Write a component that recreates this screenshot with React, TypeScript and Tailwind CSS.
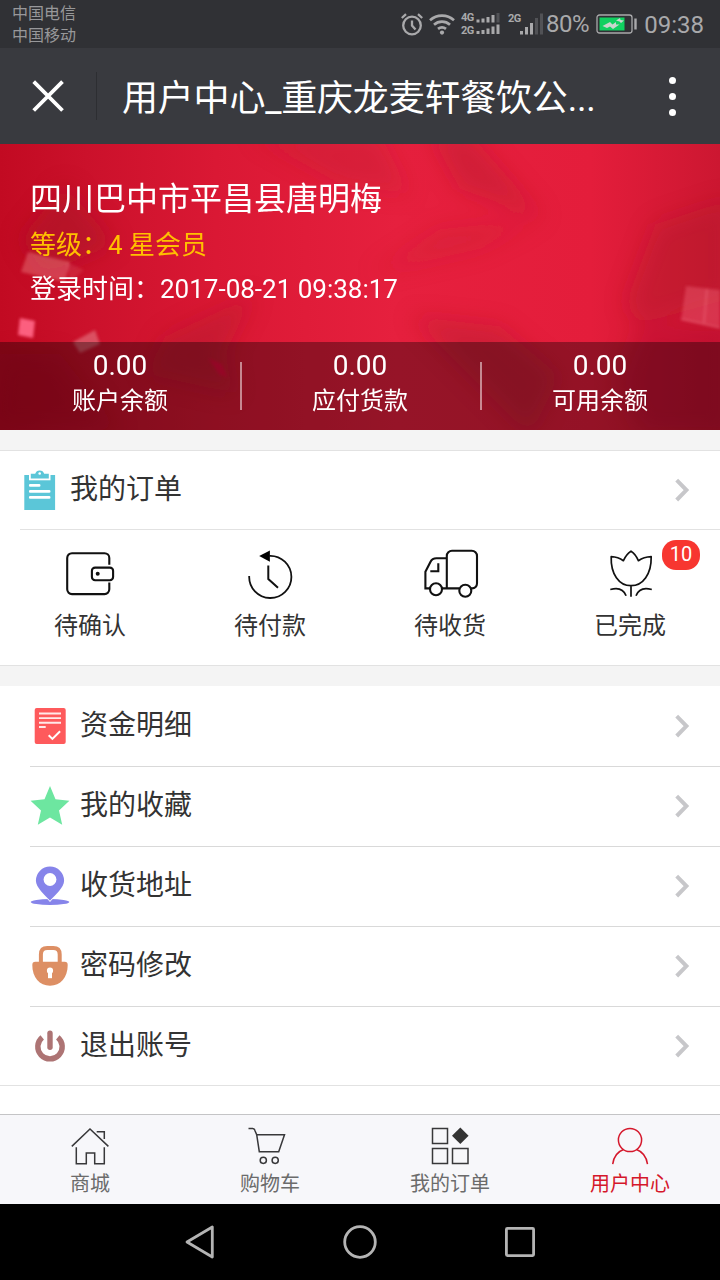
import type { ReactNode } from "react"

const ORDER_STATES = [
  { label: "待确认", icon: <WalletIcon /> },
  { label: "待付款", icon: <HistoryIcon /> },
  { label: "待收货", icon: <TruckIcon /> },
  { label: "已完成", icon: <TulipIcon />, badge: 10 },
]

const BALANCES = [
  { label: "账户余额", value: "0.00" },
  { label: "应付货款", value: "0.00" },
  { label: "可用余额", value: "0.00" },
]

const MENU = [
  { label: "资金明细", icon: <BillIcon /> },
  { label: "我的收藏", icon: <StarIcon /> },
  { label: "收货地址", icon: <PinIcon /> },
  { label: "密码修改", icon: <LockIcon /> },
  { label: "退出账号", icon: <PowerIcon /> },
]

const TABS = [
  { label: "商城", icon: <HomeIcon /> },
  { label: "购物车", icon: <CartIcon /> },
  { label: "我的订单", icon: <GridIcon /> },
  { label: "用户中心", icon: <UserIcon />, active: true },
]

function LineIcon({ children }: { children: ReactNode }) {
  return (
    <svg viewBox="0 0 60 60" className="size-[60px]" fill="none" stroke="#111" strokeWidth="2.1">
      {children}
    </svg>
  )
}

function WalletIcon() {
  return (
    <LineIcon>
      <path d="M49.3 20.7V14a4.8 4.8 0 0 0-4.8-4.8H12A4.8 4.8 0 0 0 7.2 14v31.3a4.8 4.8 0 0 0 4.8 4.8h32.5a4.8 4.8 0 0 0 4.8-4.8v-6.8" />
      <rect x="31.9" y="23.6" width="21.2" height="12.6" rx="3.2" />
      <circle cx="37.7" cy="29.7" r="2" fill="#111" stroke="none" />
    </LineIcon>
  )
}

function HistoryIcon() {
  return (
    <LineIcon>
      <path d="M9.2 32A21.1 21.1 0 1 0 29.5 11.8" strokeWidth="1.8" />
      <path d="M28.3 21.5V35l9.7 8.8" strokeWidth="2" />
      <path d="M19.2 12.1 29.9 6.5v11.2Z" fill="#000" stroke="none" />
    </LineIcon>
  )
}

function TruckIcon() {
  return (
    <LineIcon>
      <path d="M10.2 44.4H5.4V27.7l5-9.8q1.9-3.6 6-3.6h10.3" />
      <path d="M22 44.4h17.3M51 44.4h1.2a4.8 4.8 0 0 0 4.8-4.8V12a5.2 5.2 0 0 0-5.2-5.2H32a5.2 5.2 0 0 0-5.2 5.2v32.4" />
      <path d="M18.3 19.3v8h-8" />
      <circle cx="16" cy="45.2" r="6" />
      <circle cx="45.3" cy="46.7" r="6" />
    </LineIcon>
  )
}

function TulipIcon() {
  return (
    <LineIcon>
      <g strokeWidth="1.7" strokeLinejoin="round">
        <path d="M31 41.7C19 41.7 10.6 30 11.2 12.7q7 .3 12.2 4 3-6.7 7.6-9.5 4.6 2.8 7.4 9.5 5.4-3.7 12.8-4C51.5 30 43 41.7 31 41.7Zm0 0v11" />
        <path d="M10.3 45.5q12-3.5 15.8 6.2M51.8 45.5q-12-3.5-15.8 6.2" />
      </g>
    </LineIcon>
  )
}

function ClipboardIcon() {
  return (
    <svg viewBox="0 0 40 40" className="size-10" fill="#5bc6d8">
      <path d="M4.3 5h30.8v35H4.3z" />
      <path d="M9 3h21.500v7.300H9z" fill="#fff" />
      <path d="M10.8 3.800h4.400a4.700 4.700 0 0 1 9 0h4.600v4.700h-18z" />
      <circle cx="19.7" cy="3.5" r="1.3" fill="#fff" />
      <path d="M10.2 15.4h9M10.2 21.4h19M10.2 27.4h19" stroke="#fff" strokeWidth="2.6" strokeLinecap="round" />
    </svg>
  )
}

function BillIcon() {
  return (
    <svg viewBox="0 0 40 40" className="size-10" fill="none">
      <rect x="4.7" y="2" width="31" height="36" rx="2" fill="#fe5a5c" />
      <path d="M9 7.5h22M9 12.1h22M9 16.7h22M9 21h6.7" stroke="#ffe9e9" strokeWidth="1.9" />
      <path d="m18.7 29.2 3.7 3.7 7.7-7.7" stroke="#fff" strokeWidth="2" />
    </svg>
  )
}

function StarIcon() {
  return (
    <svg viewBox="0 0 40 40" className="size-10" fill="#6de6a0">
      <path d="m20 0 5.5 13.2 13.9 1.5L29 24.5l3.2 14.3L20 31.5 7.8 38.8 11 24.5.6 14.7l13.9-1.5Z" />
    </svg>
  )
}

function PinIcon() {
  return (
    <svg viewBox="0 0 40 40" className="size-10" fill="#8684ea">
      <ellipse cx="20" cy="36" rx="19.3" ry="3" />
      <path
        d="M20 34.7C15 29 5.9 21.5 5.9 14.7a14.1 14.1 0 0 1 28.2 0C34.1 21.5 25 29 20 34.7Z"
        stroke="#fff"
        strokeWidth="1.8"
        paintOrder="stroke"
      />
      <circle cx="20" cy="13.5" r="6.4" fill="#fff" />
    </svg>
  )
}

function LockIcon() {
  return (
    <svg viewBox="0 0 40 40" className="size-10" fill="#dd8f64">
      <path d="M10.9 17V8.5q0-6.4 6.4-6.4h6q6.4 0 6.4 6.4V17" fill="none" stroke="#dd8f64" strokeWidth="4" />
      <path d="M5.3 15.7h29.4q3 0 3 3.3c0 12.5-7.2 20.7-17.7 20.7S2.3 31.5 2.3 19q0-3.3 3-3.3Z" />
      <path d="M18 26.5h4v5.7h-4z" fill="#fff" />
      <circle cx="20" cy="24.7" r="3.1" fill="#fff" />
    </svg>
  )
}

function PowerIcon() {
  return (
    <svg viewBox="0 0 40 40" className="size-10" fill="none" stroke="#ad7474" strokeWidth="5.4">
      <path d="M12.2 11.3a12.2 12.2 0 1 0 15.6 0" />
      <path d="M20 7.3v14" strokeLinecap="round" />
    </svg>
  )
}

function TabIcon({ children }: { children: ReactNode }) {
  return (
    <svg viewBox="0 0 40 40" className="size-10 overflow-visible" fill="none" stroke="#38383a" strokeWidth="1.5">
      {children}
    </svg>
  )
}

function HomeIcon() {
  return (
    <TabIcon>
      <path d="M1.8 20.4 20 3l18.4 17.4M26.7 5.7h7.6V13M6.3 21.3v16.4h10V27h8.4v10.7h9.6V21.3" />
    </TabIcon>
  )
}

function CartIcon() {
  return (
    <TabIcon>
      <path d="M-1.5 2.5h4.3q1.7 0 2.2 2.2l1.7 4 2.6 17h19.4l5.8-17H6.7" />
      <circle cx="13.3" cy="34.3" r="3.1" />
      <circle cx="25.2" cy="34.3" r="3.1" />
    </TabIcon>
  )
}

function GridIcon() {
  return (
    <TabIcon>
      <path d="M2.5 2.5h15v15h-15zM2.5 22.5h15v15h-15zM22.5 22.5h15.5v15h-15.5z" />
      <path d="m30.3 1.4 8.3 8.3-8.3 8.3-8.3-8.3Z" fill="#333" stroke="none" />
    </TabIcon>
  )
}

function UserIcon() {
  return (
    <TabIcon>
      <g stroke="#d5172b">
        <circle cx="20" cy="14" r="11.6" />
        <path d="M2.7 38.2Q4 27 13.5 23.5M37.5 38.2Q36 27 26.5 23.5" />
      </g>
    </TabIcon>
  )
}

function Chevron() {
  return (
    <svg viewBox="0 0 24 24" className="ml-auto size-6 shrink-0" fill="none" stroke="#c7c7ca" strokeWidth="4">
      <path d="m6.7 2.2 9.7 9.9-9.7 9.9" />
    </svg>
  )
}

function StatusBar() {
  return (
    <div className="flex h-12 bg-[#303135] text-[#a9a9ab]">
      <div className="flex flex-col pt-[3px] pl-3 text-[16px] leading-[22px] text-[#98989a]">
        <span>中国电信</span>
        <span>中国移动</span>
      </div>
      <div className="ml-auto flex h-12 items-center pr-4">
        {/* Alarm */}
        <svg viewBox="0 0 24 24" className="mr-[5px] size-6" fill="none" stroke="currentColor" strokeWidth="2.3">
          <circle cx="12" cy="13.5" r="8.8" />
          <path d="M12 8.5v5l3.5 4M1.8 6 6 2.2M22.2 6 18 2.2" />
        </svg>
        {/* Wi-Fi */}
        <svg viewBox="0 0 26 24" className="mr-1.5 h-6 w-[26px]" fill="none" stroke="currentColor" strokeWidth="2.7">
          <path d="M1 8.2a18 18 0 0 1 24 0M5 12.7a12 12 0 0 1 16 0M9 16.9a6.5 6.5 0 0 1 8 0" />
          <circle cx="13" cy="20.6" r="2.1" fill="currentColor" stroke="none" />
        </svg>
        <div className="mr-px flex w-[14px] flex-col font-[Roboto] text-[11px] leading-[13px] font-bold tracking-[-0.5px]">
          <span>4G</span>
          <span>2G</span>
        </div>
        <svg viewBox="0 0 25 24" className="mr-[7px] h-6 w-[25px]" fill="none" stroke="currentColor" strokeWidth="3">
          <path d="M2 10.5V7.5M7 10.5V6.5M12 10.5V5M17 10.5V3M2 22V19M7 22V18M12 22V16.5M17 22V14.5M22 22V12.5" />
          <path d="M22 10.5V1" stroke="#515256" />
        </svg>
        <span className="mb-3 w-[14px] font-[Roboto] text-[11px] leading-[13px] font-bold tracking-[-0.5px]">2G</span>
        <svg viewBox="0 0 24 24" className="-ml-[3px] mr-[3px] h-6 w-6" fill="none" stroke="currentColor" strokeWidth="3">
          <path d="M2.5 22.5V19M7.5 22.5V15M12.5 22.5V11" />
          <path d="M17.5 22.5V6M22.5 22.5V1.5" stroke="#515256" />
        </svg>
        <span className="mr-[7px] text-[24px] leading-6 tracking-[-0.4px]">80%</span>
        <svg viewBox="0 0 42 20" className="mr-[6px] h-5 w-[42px]" fill="none">
          <rect x="1" y="1" width="35" height="18" rx="2.5" stroke="currentColor" strokeWidth="1.3" />
          <path d="M39.5 4.5v11" stroke="currentColor" strokeWidth="2.4" />
          <path d="M3.5 3.5h25v13h-25z" fill="#10d060" />
          <path d="m6.5 12 7.500-4 2.500 2.500 3.500-2.500v2.500h3.500l-6.500 4.500-3-2.500-3 1.500ZM20 6.500l4-2.500.5 2 3.500.5-3 2.500-1.500-1.500Z" fill="#c9d6cd" />
        </svg>
        <span className="pt-px text-[24px] leading-6">09:38</span>
      </div>
    </div>
  )
}

function TitleBar() {
  return (
    <div className="flex h-24 items-center bg-[#393a3f] text-white">
      <svg viewBox="0 0 32 32" className="ml-8 size-8" fill="none" stroke="#fff" strokeWidth="3.8">
        <path d="m1.7 1.7 28.8 28.8M30.5 1.7 1.7 30.5" />
      </svg>
      <div className="ml-8 h-12 w-px bg-[#2d2e32]" />
      <h1 className="ml-[25px] pt-1.5 text-[36px] leading-[48px] tracking-[-0.2px]">用户中心_重庆龙麦轩餐饮公...</h1>
      <div className="ml-auto mr-11 flex flex-col gap-[9px]">
        <span className="size-[7px] rounded-full bg-white" />
        <span className="size-[7px] rounded-full bg-white" />
        <span className="size-[7px] rounded-full bg-white" />
      </div>
    </div>
  )
}

function BannerBackdrop() {
  return (
    <svg viewBox="0 0 720 286" className="absolute inset-0 h-full w-full" preserveAspectRatio="none">
      <defs>
        <linearGradient id="base">
          <stop offset="0" stopColor="#c20a22" />
          <stop offset="0.12" stopColor="#cb112b" />
          <stop offset="0.3" stopColor="#da1834" />
          <stop offset="0.55" stopColor="#e6203e" />
          <stop offset="0.82" stopColor="#e41d3b" />
          <stop offset="1" stopColor="#cc1731" />
        </linearGradient>
        <filter id="soft" x="-40%" y="-40%" width="180%" height="180%">
          <feGaussianBlur stdDeviation="11" />
        </filter>
        <filter id="edge" x="-30%" y="-30%" width="160%" height="160%">
          <feGaussianBlur stdDeviation="1.6" />
        </filter>
      </defs>
      <path d="M0 0h720v286H0z" fill="url(#base)" />
      <g filter="url(#soft)">
        <path d="M250-10h130l30 60-70-10Z" fill="#b91a30" opacity=".25" />
        <path d="M430-10h40l75 85-85-30Z" fill="#a91a30" opacity=".32" />
        <path d="M440 85 540 75 480 105 370 130Z" fill="#c01c34" opacity=".25" />
        <path d="m20 95 45-55 50 60-70 30Z" fill="#9e1128" opacity=".4" />
        <path d="m165 192 90-42-30 60 10 40-90-20Z" fill="#a2122b" opacity=".32" />
        <path d="m410 172 90 10 60 50-30 60Z" fill="#a5152d" opacity=".32" />
        <path d="m655 80 75-25v100l-90 25-15-20Z" fill="#a81028" opacity=".35" />
        <path d="m640 180 90 0v110h-90l-25-50Z" fill="#a81028" opacity=".3" />
        <path d="m0 210 60 0 60 76H-10Z" fill="#a80b23" opacity=".3" />
      </g>
      <g filter="url(#edge)">
        <path d="m28 108 42 10-5 20-44-10Z" fill="#ed8588" opacity=".42" />
        <path d="m66 118 18 8-14 12Z" fill="#ed8588" opacity=".18" />
        <path d="m20 174 15 3-2 17-15-3Z" fill="#ff6484" opacity=".95" />
        <path d="m73 198 22-12 5 14-20 9Z" fill="#e4727e" opacity=".65" />
        <path d="m208 214 14 6 6 14-9-4Z" fill="#f50640" opacity=".6" />
        <path d="m686 142 34 4v38l-39-8Z" fill="#ef6274" opacity=".42" />
        <path d="m681 175 39 9M707 145l-3 34" stroke="#f68391" opacity=".6" />
      </g>
    </svg>
  )
}

function Banner() {
  return (
    <div className="relative h-[286px] overflow-hidden text-white">
      <BannerBackdrop />
      <div className="relative flex h-full flex-col">
        <div className="flex-1 pt-8 pl-[30px]">
          <p className="text-[32px] leading-[46px]">四川巴中市平昌县唐明梅</p>
          <p className="pt-px text-[26px] leading-[44px] text-[#ffc000]">等级：4 星会员</p>
          <p className="text-[26px] leading-[45px]">登录时间：2017-08-21 09:38:17</p>
        </div>
        <div className="flex h-[88px] items-center bg-black/35">
          {BALANCES.map((item, i) => (
            <div key={item.label} className="flex flex-1 items-center">
              <div className="flex-1 pb-1 text-center">
                <p className="text-[28px] leading-[34px]">{item.value}</p>
                <p className="text-[24px] leading-[36px]">{item.label}</p>
              </div>
              {i < BALANCES.length - 1 && <div className="-mr-0.5 h-12 w-0.5 bg-white/50" />}
            </div>
          ))}
        </div>
      </div>
    </div>
  )
}

function Orders() {
  return (
    <section className="h-[216px] border-y border-[#e2e2e2] bg-white">
      <div className="ml-5 flex h-[79px] items-center border-b border-[#e2e2e2] pr-[26px]">
        <ClipboardIcon />
        <span className="ml-2.5 text-[28px] leading-10">我的订单</span>
        <Chevron />
      </div>
      <div className="grid grid-cols-4 pt-3.5">
        {ORDER_STATES.map((state) => (
          <div key={state.label} className="relative flex flex-col items-center">
            {state.icon}
            <span className="mt-1 text-[24px] leading-9">{state.label}</span>
            {state.badge && (
              <span className="absolute -top-1 right-5 h-[30px] w-[38px] rounded-[14px] bg-[#f73630] text-center text-[20px] leading-[28px] text-white">
                {state.badge}
              </span>
            )}
          </div>
        ))}
      </div>
    </section>
  )
}

function Menu() {
  return (
    <section className="border-b border-[#e2e2e2] bg-white">
      {MENU.map((item) => (
        <div
          key={item.label}
          className="ml-[30px] flex h-20 items-center border-t border-[#d9d9d9] pr-[26px] pb-px first:border-t-0 first:pb-0 last:h-[79px] last:pb-0"
        >
          {item.icon}
          <span className="ml-2.5 text-[28px] leading-10">{item.label}</span>
          <Chevron />
        </div>
      ))}
    </section>
  )
}

function TabBar() {
  return (
    <nav className="grid h-[90px] grid-cols-4 border-t border-[#c4c4c6] bg-[#f7f7fa] pt-[11px]">
      {TABS.map((tab) => (
        <a key={tab.label} className="flex flex-col items-center">
          {tab.icon}
          <span className={`pt-0.5 text-[20px] leading-[32px] ${tab.active ? "text-[#d5172b]" : "text-[#6b6b6b]"}`}>
            {tab.label}
          </span>
        </a>
      ))}
    </nav>
  )
}

function SystemNav() {
  return (
    <div className="flex h-[76px] items-center justify-center gap-[120px] bg-black">
      <svg viewBox="0 0 40 40" className="size-10" fill="none" stroke="#b4b4b4" strokeWidth="2.8" strokeLinejoin="round">
        <path d="M7 20 32.3 5v30Z" />
      </svg>
      <svg viewBox="0 0 40 40" className="size-10" fill="none" stroke="#b4b4b4" strokeWidth="2.8">
        <circle cx="20" cy="20" r="15.3" />
      </svg>
      <svg viewBox="0 0 40 40" className="size-10" fill="none" stroke="#b4b4b4" strokeWidth="2.8">
        <rect x="6.4" y="6.4" width="27.2" height="27.2" rx="1" />
      </svg>
    </div>
  )
}

const App = () => {
  return (
    <div className="flex h-[1280px] w-[720px] flex-col overflow-hidden bg-white font-[Roboto,'Noto_Sans_CJK_SC',sans-serif] text-[#333]">
      <StatusBar />
      <TitleBar />
      <Banner />
      <div className="h-5 bg-[#f4f4f4]" />
      <Orders />
      <div className="h-5 bg-[#f4f4f4]" />
      <Menu />
      <div className="flex-1 bg-white" />
      <TabBar />
      <SystemNav />
    </div>
  )
}

export default App
